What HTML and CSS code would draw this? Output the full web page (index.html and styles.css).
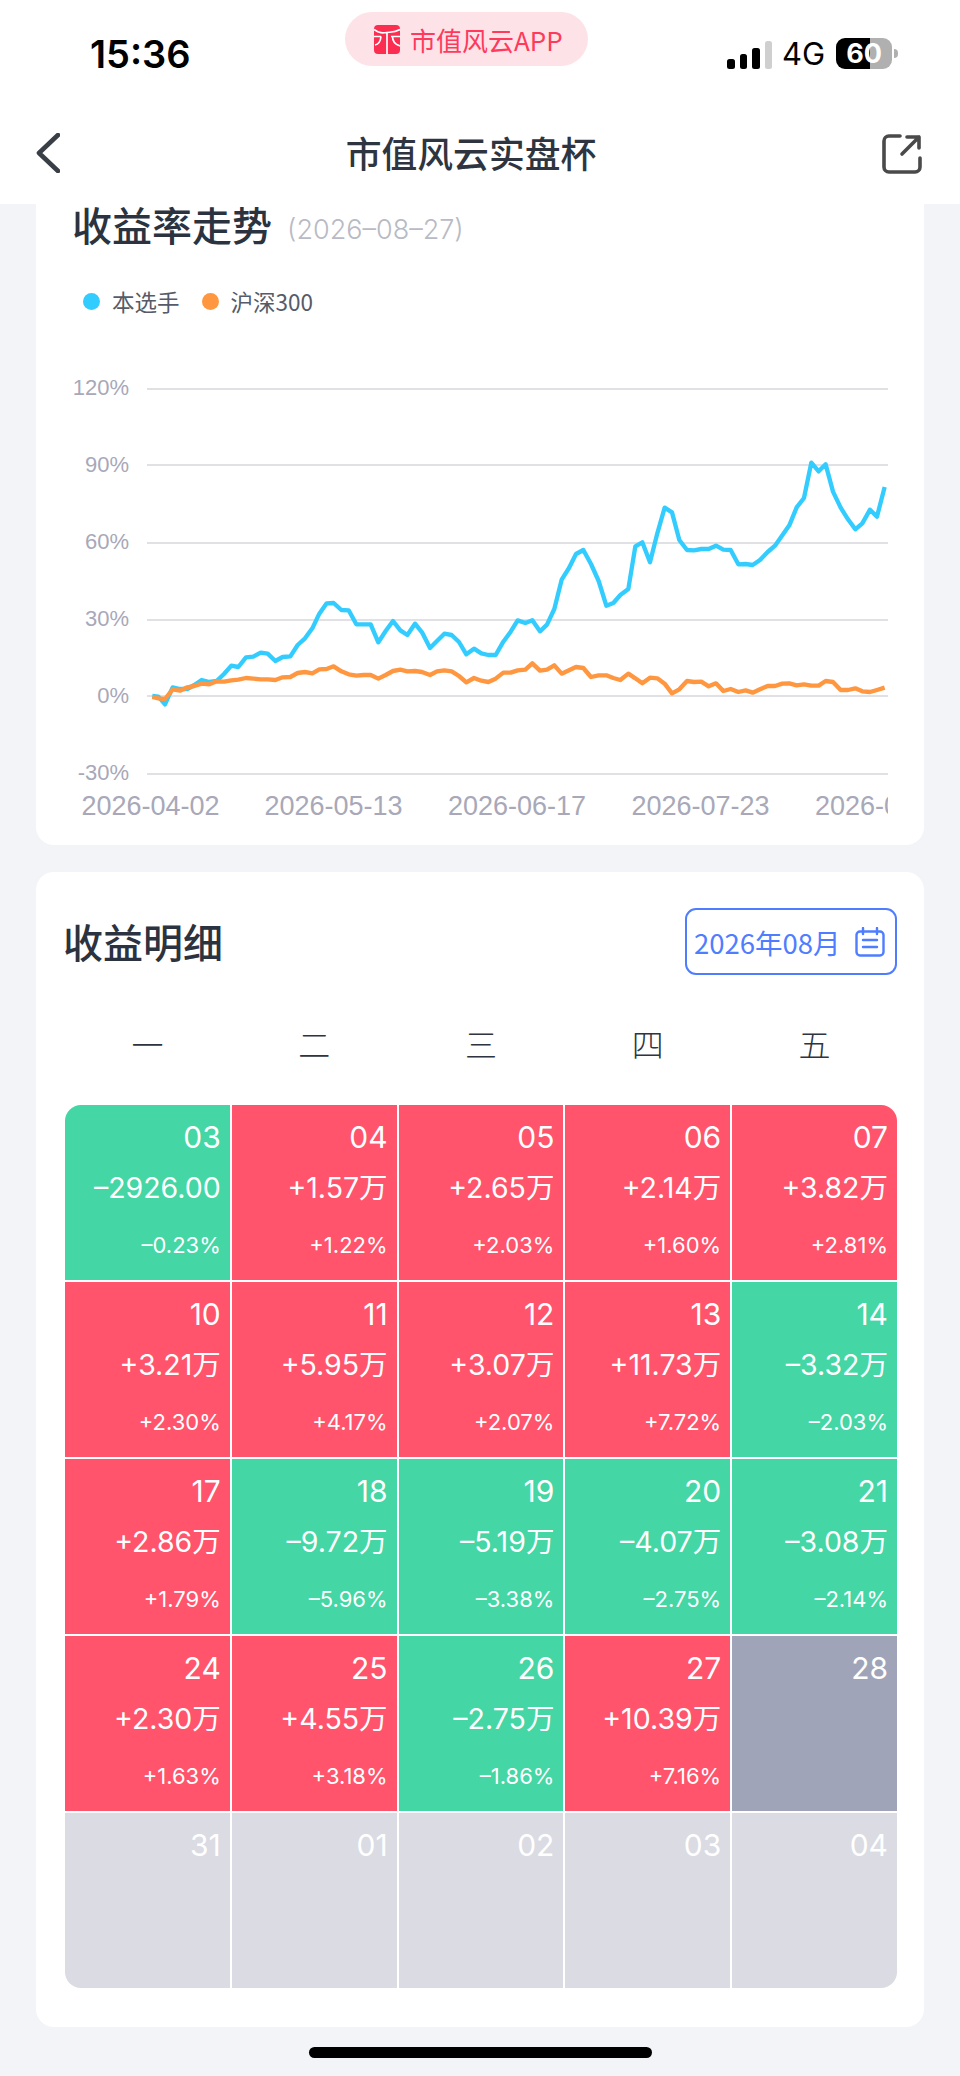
FILE: index.html
```html
<!DOCTYPE html>
<html lang="zh">
<head>
<meta charset="utf-8">
<title>市值风云实盘杯</title>
<link rel="stylesheet" href="styles.css">
</head>
<body>
<div class="page">
  <header class="top">
    <div class="status">
      <span class="time">15:36</span>
      <div class="app-pill">
        <svg class="app-logo" viewBox="0 0 26 29" aria-hidden="true">
          <rect width="26" height="29" rx="4" fill="#fb2d50"/>
          <path d="M0 4.500C5 8.500 9 8 13 7.500s8 0 13-3M0 11.500h7M1 20c3-.5 5.500-3.500 6-8.500M13 7.500V29M18.500 11.500c0 5 2.500 8 7.500 9.500M17 11.500h9" fill="none" stroke="#fff" stroke-width="1.700"/>
        </svg>
        <span>市值风云APP</span>
      </div>
      <div class="indicators">
        <div class="signal">
          <i class="bar bar1"></i><i class="bar bar2"></i><i class="bar bar3"></i><i class="bar bar4"></i>
        </div>
        <span class="net">4G</span>
        <div class="battery"><span>60</span></div>
        <i class="nub"></i>
      </div>
    </div>
    <nav class="navbar">
      <svg class="back" viewBox="0 0 24 40" aria-hidden="true"><path d="M22 2 3 20l19 18" fill="none" stroke="#3a3f47" stroke-width="4.600" stroke-linecap="round" stroke-linejoin="round"/></svg>
      <h1 class="nav-title">市值风云实盘杯</h1>
      <svg class="share" viewBox="0 0 40 40" aria-hidden="true">
        <path d="M18 2H7a5 5 0 0 0-5 5v26a5 5 0 0 0 5 5h26a5 5 0 0 0 5-5V24" fill="none" stroke="#4a4a4a" stroke-width="3.600" stroke-linecap="round"/>
        <path d="M20 20 37 3M25 3h12v11" fill="none" stroke="#4a4a4a" stroke-width="3.600" stroke-linecap="round" stroke-linejoin="round"/>
      </svg>
    </nav>
  </header>

  <main class="content">
    <section class="card chart-card">
      <div class="chart-head">
        <h2 class="section-title">收益率走势</h2>
        <span class="as-of">(2026–08–27)</span>
      </div>
      <div class="legend">
        <span class="legend-item"><i class="dot dot-blue"></i>本选手</span>
        <span class="legend-item"><i class="dot dot-orange"></i>沪深300</span>
      </div>
      <svg class="chart" viewBox="36 320 888 520" aria-label="收益率走势图">
        <defs><clipPath id="plot-clip"><rect x="36" y="780" width="852" height="50"/></clipPath></defs>
        <g class="grid-lines">
          <line x1="147" x2="888" y1="389" y2="389"/>
          <line x1="147" x2="888" y1="465" y2="465"/>
          <line x1="147" x2="888" y1="543" y2="543"/>
          <line x1="147" x2="888" y1="620" y2="620"/>
          <line x1="147" x2="888" y1="696" y2="696"/>
          <line x1="147" x2="888" y1="774" y2="774"/>
        </g>
        <g class="y-labels">
          <text x="129" y="395">120%</text>
          <text x="129" y="472">90%</text>
          <text x="129" y="549">60%</text>
          <text x="129" y="626">30%</text>
          <text x="129" y="703">0%</text>
          <text x="129" y="780">-30%</text>
        </g>
        <g class="x-labels" clip-path="url(#plot-clip)">
          <text x="81.500" y="815">2026-04-02</text>
          <text x="264.500" y="815">2026-05-13</text>
          <text x="448" y="815">2026-06-17</text>
          <text x="631.500" y="815">2026-07-23</text>
          <text x="815" y="815">2026-08-27</text>
        </g>
        <g transform="translate(120 370) scale(.33333)">
          <polyline class="line-blue" points="97,978 115,980 135,1003 158,952 180,957 202,957 223,945 245,930 268,936 290,933 312,912 334,887 355,891 378,862 400,860 422,848 443,851 466,873 488,861 511,859 533,825 555,805 577,775 598,731 620,700 641,699 664,720 686,721 709,763 731,763 752,763 775,817 797,783 819,753 841,781 862,795 885,761 906,787 930,834 951,813 973,791 995,795 1017,816 1039,853 1062,836 1084,850 1105,855 1127,855 1150,815 1172,785 1193,751 1216,759 1237,751 1260,784 1281,764 1303,717 1325,629 1347,594 1368,552 1390,540 1413,582 1436,633 1459,707 1480,699 1501,675 1525,657 1546,529 1567,517 1590,577 1612,490 1634,413 1656,427 1678,510 1701,540 1722,541 1744,537 1766,537 1788,527 1810,539 1832,540 1855,583 1877,582 1898,585 1920,570 1943,546 1965,527 1987,496 2008,466 2030,412 2052,384 2074,278 2096,304 2117,283 2139,365 2162,413 2184,448 2206,478 2227,460 2250,419 2271,440 2294,351"/>
          <polyline class="line-orange" points="97,981 115,985 135,987 158,958 180,962 202,952 223,948 245,941 268,943 290,934 312,935 334,931 355,929 378,924 400,926 422,928 443,928 466,930 488,922 511,921 533,909 555,906 577,910 598,898 620,897 641,889 664,904 686,913 709,917 731,915 752,915 775,926 797,915 819,903 841,899 862,904 885,903 906,906 930,915 951,904 973,901 995,904 1017,918 1039,937 1062,924 1084,932 1105,936 1127,926 1150,908 1172,908 1193,901 1216,899 1237,880 1260,902 1281,899 1303,886 1325,911 1347,901 1368,891 1390,894 1413,921 1436,916 1459,916 1480,924 1501,930 1525,911 1546,925 1567,940 1590,923 1612,925 1634,941 1656,970 1678,958 1701,933 1722,936 1744,935 1766,949 1788,940 1810,963 1832,957 1855,966 1877,961 1898,968 1920,958 1943,948 1965,948 1987,941 2008,940 2030,946 2052,943 2074,947 2096,947 2117,933 2139,936 2162,960 2184,960 2206,955 2227,964 2250,966 2271,960 2294,953"/>
        </g>
      </svg>
    </section>

    <section class="card detail-card">
      <div class="detail-head">
        <h2 class="section-title">收益明细</h2>
        <div class="month-btn">
          <span>2026年08月</span>
          <svg class="cal" viewBox="0 0 30 30" aria-hidden="true">
            <rect x="1.500" y="4.500" width="27" height="24" rx="3.500" fill="none" stroke="#4f7dff" stroke-width="2.400"/>
            <path d="M8 1v6M22 1v6M8 13h14M8 20h14" fill="none" stroke="#4f7dff" stroke-width="2.400" stroke-linecap="round"/>
          </svg>
        </div>
      </div>
      <div class="weekdays">
        <span>一</span><span>二</span><span>三</span><span>四</span><span>五</span>
      </div>
      <div class="calendar">
        <div class="cell down"><div class="d">03</div><div class="v">–2926.00</div><div class="p">–0.23%</div></div>
        <div class="cell up"><div class="d">04</div><div class="v">+1.57万</div><div class="p">+1.22%</div></div>
        <div class="cell up"><div class="d">05</div><div class="v">+2.65万</div><div class="p">+2.03%</div></div>
        <div class="cell up"><div class="d">06</div><div class="v">+2.14万</div><div class="p">+1.60%</div></div>
        <div class="cell up"><div class="d">07</div><div class="v">+3.82万</div><div class="p">+2.81%</div></div>

        <div class="cell up"><div class="d">10</div><div class="v">+3.21万</div><div class="p">+2.30%</div></div>
        <div class="cell up"><div class="d">11</div><div class="v">+5.95万</div><div class="p">+4.17%</div></div>
        <div class="cell up"><div class="d">12</div><div class="v">+3.07万</div><div class="p">+2.07%</div></div>
        <div class="cell up"><div class="d">13</div><div class="v">+11.73万</div><div class="p">+7.72%</div></div>
        <div class="cell down"><div class="d">14</div><div class="v">–3.32万</div><div class="p">–2.03%</div></div>

        <div class="cell up"><div class="d">17</div><div class="v">+2.86万</div><div class="p">+1.79%</div></div>
        <div class="cell down"><div class="d">18</div><div class="v">–9.72万</div><div class="p">–5.96%</div></div>
        <div class="cell down"><div class="d">19</div><div class="v">–5.19万</div><div class="p">–3.38%</div></div>
        <div class="cell down"><div class="d">20</div><div class="v">–4.07万</div><div class="p">–2.75%</div></div>
        <div class="cell down"><div class="d">21</div><div class="v">–3.08万</div><div class="p">–2.14%</div></div>

        <div class="cell up"><div class="d">24</div><div class="v">+2.30万</div><div class="p">+1.63%</div></div>
        <div class="cell up"><div class="d">25</div><div class="v">+4.55万</div><div class="p">+3.18%</div></div>
        <div class="cell down"><div class="d">26</div><div class="v">–2.75万</div><div class="p">–1.86%</div></div>
        <div class="cell up"><div class="d">27</div><div class="v">+10.39万</div><div class="p">+7.16%</div></div>
        <div class="cell today"><div class="d">28</div></div>

        <div class="cell future"><div class="d">31</div></div>
        <div class="cell future"><div class="d">01</div></div>
        <div class="cell future"><div class="d">02</div></div>
        <div class="cell future"><div class="d">03</div></div>
        <div class="cell future"><div class="d">04</div></div>
      </div>
    </section>
  </main>
  <div class="home-bar"></div>
</div>
</body>
</html>
```

FILE: styles.css
```css
* { box-sizing: border-box; }

html, body {
  margin: 0;
  padding: 0;
}

body {
  background: #f3f4f8;
  font-family: Inter, "Noto Sans CJK SC", sans-serif;
  color: #2c3340;
}

h1, h2 { margin: 0; }

.page {
  width: 960px;
  height: 2076px;
  overflow: hidden;
  display: flex;
  flex-direction: column;
}

/* header */
.top {
  height: 204px;
  flex: none;
  background: #fff;
}

.status {
  height: 96px;
  padding-left: 90px;
  display: flex;
  align-items: flex-start;
}

.time {
  margin-top: 32px;
  font-size: 38px;
  line-height: 44px;
  font-weight: 600;
  color: #000;
  width: 100px;
  white-space: nowrap;
}

.app-pill {
  margin: 12px 0 0 155px;
  width: 243px;
  height: 54px;
  border-radius: 27px;
  background: #fde3e8;
  color: #ff3a5c;
  padding-left: 29px;
  display: flex;
  align-items: center;
  gap: 10px;
  font-size: 26px;
  font-weight: 400;
  font-family: "Noto Sans CJK SC", sans-serif;
}

.app-logo {
  width: 26px;
  height: 29px;
  flex: none;
}

.indicators {
  margin: 38px 0 0 139px;
  display: flex;
  align-items: center;
  height: 31px;
}

.signal {
  display: flex;
  align-items: flex-end;
  gap: 5px;
  height: 30px;
}

.bar {
  display: block;
  width: 7.500px;
  border-radius: 2.500px;
  background: #000;
}
.bar1 { height: 10px; }
.bar2 { height: 15px; }
.bar3 { height: 21px; }
.bar4 { height: 28px; background: #cfcfcf; }

.net {
  margin-left: 10px;
  font-size: 31px;
  line-height: 31px;
  font-weight: 400;
  color: #000;
}

.battery {
  margin-left: 11px;
  width: 56px;
  height: 31px;
  border-radius: 9px;
  background: linear-gradient(90deg, #000 0, #000 34px, #b0b0b0 34px);
  color: #fff;
  font-size: 27px;
  line-height: 31px;
  font-weight: 700;
  text-align: center;
}

.nub {
  display: block;
  margin-left: 2px;
  width: 4px;
  height: 9px;
  border-radius: 0 4px 4px 0;
  background: #b0b0b0;
}

.navbar {
  height: 108px;
  padding: 0 38px 0 36px;
  display: flex;
  align-items: flex-start;
  justify-content: space-between;
}

.back {
  margin-top: 37px;
  width: 24px;
  height: 40px;
}

.nav-title {
  margin: 30px 0 0 0;
  font-family: "Noto Sans CJK SC", sans-serif;
  font-size: 35.800px;
  line-height: 52px;
  font-weight: 500;
  color: #2f3540;
}

.share {
  margin-top: 38px;
  width: 40px;
  height: 40px;
}

/* content */
.content {
  padding: 0 36px;
  display: flex;
  flex-direction: column;
  gap: 27px;
}

.card {
  background: #fff;
  border-radius: 18px;
}

.chart-card {
  height: 641px;
  border-radius: 0 0 18px 18px;
  padding-left: 36px;
}

.chart-head {
  display: flex;
  align-items: center;
  gap: 15px;
  height: 40px;
}

.section-title {
  font-family: "Noto Sans CJK SC", sans-serif;
  font-size: 40px;
  line-height: 44px;
  font-weight: 500;
  color: #2c3340;
}

.as-of {
  margin-top: 12px;
  font-size: 27px;
  line-height: 34px;
  font-weight: 300;
  color: #b8bac4;
}

.legend {
  margin-top: 40px;
  padding-left: 11px;
  height: 34px;
  display: flex;
  align-items: center;
  gap: 22px;
  font-family: "Noto Sans CJK SC", sans-serif;
  font-size: 22.500px;
  font-weight: 400;
  color: #555b68;
}

.legend-item {
  display: flex;
  align-items: center;
  gap: 12px;
}

.dot {
  display: block;
  width: 17px;
  height: 17px;
  border-radius: 50%;
}
.dot-blue { background: #33ccff; }
.dot-orange { background: #ff9640; }

.chart {
  display: block;
  margin: 2px 0 0 -36px;
  width: 888px;
  height: 520px;
}

.grid-lines line {
  stroke: #e0e0e5;
  stroke-width: 1.800;
}

.y-labels text {
  font-family: "Liberation Sans", sans-serif;
  font-size: 22px;
  fill: #a8a8b8;
  text-anchor: end;
}

.x-labels text {
  font-family: "Liberation Sans", sans-serif;
  font-size: 27px;
  fill: #a8a8b8;
}

.line-blue, .line-orange {
  fill: none;
  stroke-width: 13;
  stroke-linejoin: round;
}
.line-blue { stroke: #33ccff; }
.line-orange { stroke: #ff9640; }

.detail-card {
  height: 1155px;
  padding: 36px 27px 0 29px;
}

.detail-head {
  height: 67px;
  display: flex;
  align-items: center;
  justify-content: space-between;
}

.detail-head .section-title {
  margin: -2px 0 0 -2px;
}

.month-btn {
  width: 212px;
  height: 67px;
  border: 2.500px solid #4f7dff;
  border-radius: 11px;
  padding: 0 10px 0 7px;
  display: flex;
  align-items: center;
  justify-content: space-between;
  color: #4f7dff;
  font-size: 27.500px;
  font-family: "Noto Sans CJK SC", sans-serif;
  font-weight: 400;
}

.cal {
  width: 30px;
  height: 30px;
  flex: none;
}

.weekdays {
  margin-top: 46px;
  height: 44px;
  display: grid;
  grid-template-columns: repeat(5, 1fr);
  column-gap: 2px;
  font-family: "Noto Sans CJK SC", sans-serif;
  font-size: 32px;
  line-height: 44px;
  font-weight: 300;
  color: #2f3540;
  text-align: center;
}

.calendar {
  margin-top: 40px;
  display: grid;
  grid-template-columns: repeat(5, 1fr);
  grid-auto-rows: 175px;
  gap: 2px;
  border-radius: 16px;
  overflow: hidden;
}

.cell {
  padding: 12px 9px 0 0;
  text-align: right;
  color: #fff;
  font-weight: 400;
}

.up { background: #ff546c; }
.down { background: #44d6a4; }
.today { background: #a0a4b9; }
.future { background: #dadbe3; }

.d {
  font-size: 30px;
  line-height: 40px;
}

.v {
  margin-top: 11px;
  font-size: 28.500px;
  line-height: 40px;
  font-family: Inter, "Noto Sans CJK SC", sans-serif;
  white-space: nowrap;
}

.p {
  margin-top: 22px;
  font-size: 22px;
  line-height: 30px;
  white-space: nowrap;
}

.home-bar {
  margin: 20px auto 0;
  width: 343px;
  height: 11px;
  border-radius: 6px;
  background: #000;
  flex: none;
}
```
